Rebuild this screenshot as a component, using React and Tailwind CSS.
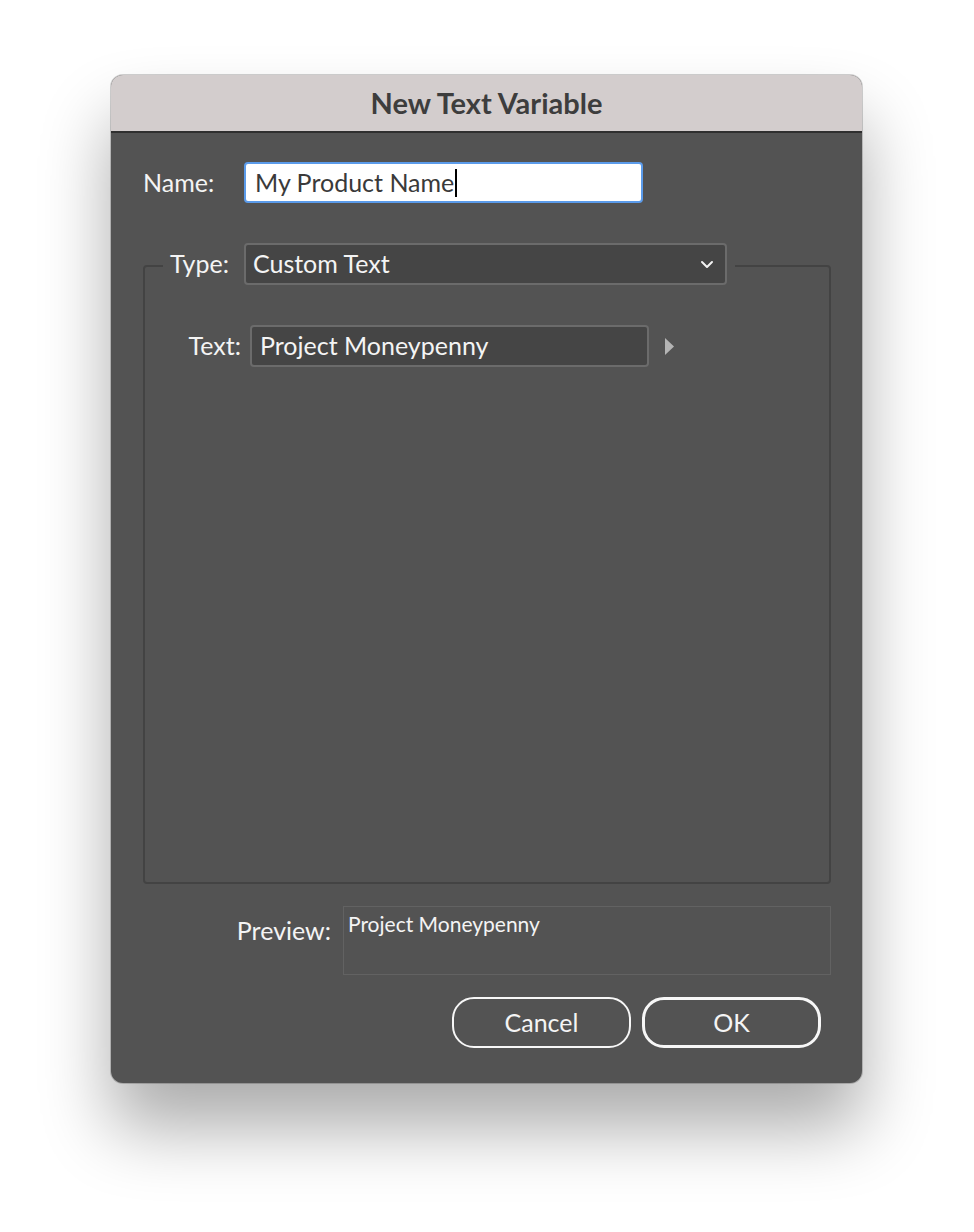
import React from "react";

const font = { fontFamily: "Lato, 'Noto Sans', sans-serif" };

function Chevron() {
  return (
    <svg width="14" height="9" viewBox="0 0 14 9" fill="none">
      <path d="M2 2 L7 7 L12 2" stroke="#f2f2f2" strokeWidth="2" strokeLinecap="round" strokeLinejoin="round" />
    </svg>
  );
}

function Triangle() {
  return (
    <svg width="9" height="17" viewBox="0 0 9 17">
      <path d="M0 0 L9 8.5 L0 17 Z" fill="#b4b4b4" />
    </svg>
  );
}

export default function App() {
  return (
    <div className="w-full h-[1232px] bg-white pt-[75px] pl-[111px]" style={font}>
      <div className="w-[751px] h-[1008px] rounded-[12px] overflow-hidden bg-[#535353] flex flex-col shadow-[0_45px_70px_rgba(0,0,0,0.33),0_0_0_1px_rgba(0,0,0,0.18)]">
        {/* Title bar */}
        <div className="h-[58px] bg-[#d3cdcd] border-b-2 border-[#2f2f2f] flex items-center justify-center shrink-0">
          <span className="text-[29px] font-bold text-[#3d3d3d]">New Text Variable</span>
        </div>

        <div className="flex flex-col pl-[32px] pr-[31px] pt-[29px]">
          {/* Name */}
          <div className="flex items-center">
            <span className="w-[101px] text-[25px] text-[#f4f4f4]">Name:</span>
            <div className="w-[399px] h-[41px] rounded-[4px] border-2 border-[#5b9bea] bg-white flex items-center px-[9px]">
              <span className="text-[25px] text-[#3a3a3a]">My Product Name</span>
              <span className="w-[2px] h-[28px] bg-black ml-[1px]"></span>
            </div>
          </div>

          {/* Type group */}
          <div className="mt-[40px] flex flex-col">
            <div className="relative z-10 self-start ml-[20px] pl-[7px] pr-[8px] bg-[#535353] flex items-center gap-[15px]">
              <span className="text-[25px] text-[#f4f4f4]">Type:</span>
              <div className="w-[483px] h-[42px] rounded-[4px] border-2 border-[#6b6b6b] bg-[#454545] flex items-center justify-between pl-[7px] pr-[11px]">
                <span className="text-[25px] text-[#f4f4f4]">Custom Text</span>
                <Chevron />
              </div>
            </div>
            <div className="-mt-[20px] h-[619px] border-2 border-[#434343] rounded-[4px] pt-[58px] flex flex-col">
              <div className="flex items-center">
                <span className="w-[105px] text-right pr-[9px] text-[25px] text-[#f4f4f4]">Text:</span>
                <div className="w-[399px] h-[42px] rounded-[4px] border-2 border-[#6b6b6b] bg-[#454545] flex items-center px-[8px]">
                  <span className="text-[25px] text-[#f4f4f4]">Project Moneypenny</span>
                </div>
                <div className="ml-[16px] flex items-center">
                  <Triangle />
                </div>
              </div>
            </div>
          </div>

          {/* Preview */}
          <div className="mt-[22px] flex items-start">
            <span className="w-[200px] text-right pr-[12px] pt-[6px] text-[25px] text-[#f4f4f4]">Preview:</span>
            <div className="w-[488px] h-[69px] border border-[#626262] px-[4px] pt-[1px]">
              <span className="text-[21px] text-[#f4f4f4]">Project Moneypenny</span>
            </div>
          </div>

          {/* Buttons */}
          <div className="mt-[22px] flex justify-end gap-[11px] pr-[10px]">
            <button className="w-[179px] h-[51px] rounded-[22px] border-2 border-[#f7f7f7] text-[25px] text-[#f4f4f4]">
              Cancel
            </button>
            <button className="w-[179px] h-[51px] rounded-[22px] border-[3px] border-[#f7f7f7] text-[25px] text-[#f4f4f4]">
              OK
            </button>
          </div>
        </div>
      </div>
    </div>
  );
}
